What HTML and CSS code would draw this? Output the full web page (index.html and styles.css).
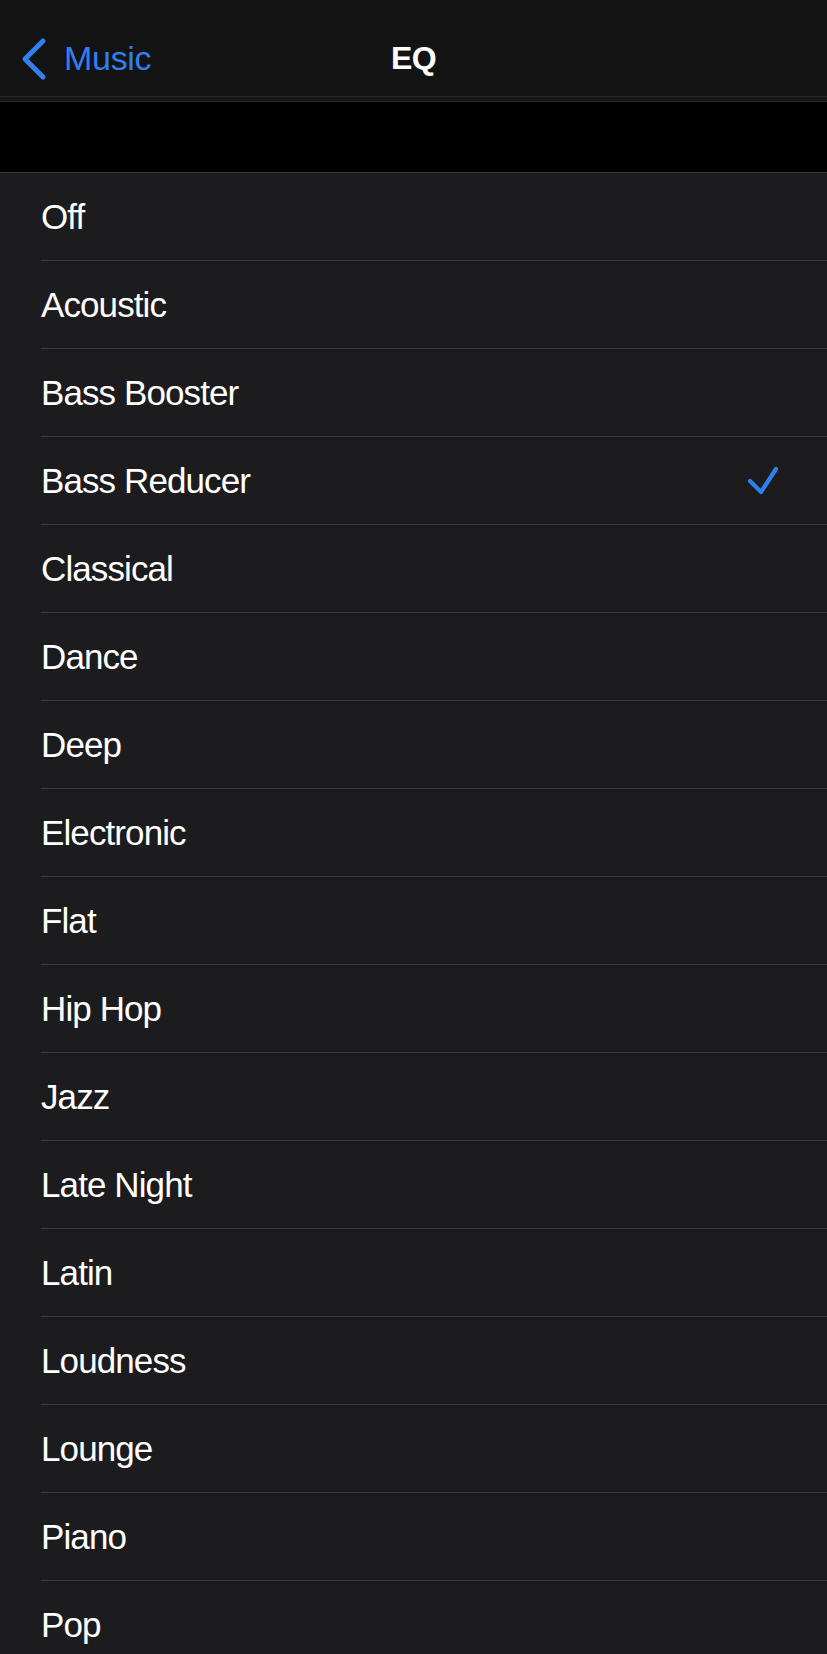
FILE: index.html
```html
<!DOCTYPE html>
<html lang="en">
<head>
  <meta charset="UTF-8" />
  <meta name="viewport" content="width=device-width, initial-scale=1.0"/>
  <title>EQ</title>
  <link rel="stylesheet" href="styles.css">
</head>
<body>
  <div class="nav">
    <div class="nav-inner">
      <a class="back" href="#">
        <svg class="chevron" width="30" height="44" viewBox="0 0 30 44">
          <polyline points="22,4 4,22 22,40" fill="none" stroke="currentColor" stroke-width="5" stroke-linecap="round" stroke-linejoin="round"/>
        </svg>
        <span>Music</span>
      </a>
      <div class="title">EQ</div>
    </div>
  </div>
  <div class="nav-strip"></div>
  <div class="gap"></div>

  <ul class="list">
    <li class="row">Off</li>
    <li class="row">Acoustic</li>
    <li class="row">Bass Booster</li>
    <li class="row selected">Bass Reducer
      <svg class="check" width="32" height="30" viewBox="0 0 32 30">
        <polyline points="3,15 14,26 29,3" fill="none" stroke="currentColor" stroke-width="4.2" stroke-linecap="round" stroke-linejoin="round"/>
      </svg>
    </li>
    <li class="row">Classical</li>
    <li class="row">Dance</li>
    <li class="row">Deep</li>
    <li class="row">Electronic</li>
    <li class="row">Flat</li>
    <li class="row">Hip Hop</li>
    <li class="row">Jazz</li>
    <li class="row">Late Night</li>
    <li class="row">Latin</li>
    <li class="row">Loudness</li>
    <li class="row">Lounge</li>
    <li class="row">Piano</li>
    <li class="row">Pop</li>
  </ul>
</body>
</html>
```

FILE: styles.css
```css
html, body {
  margin: 0;
  padding: 0;
}
body {
  height: 100vh;
  overflow: hidden;
  background: #1c1c1e;
  font-family: "Liberation Sans", Arial, sans-serif;
  color: #fff;
}
.nav {
  height: 97px;
  background: #131313;
  border-bottom: 1px solid #2a2a2a;
  box-sizing: border-box;
  padding-top: 20px;
}
.nav-inner {
  position: relative;
  height: 77px;
  display: flex;
  align-items: center;
  justify-content: center;
}
.back {
  position: absolute;
  left: 21px;
  top: 0;
  bottom: 0;
  display: flex;
  align-items: center;
  gap: 13px;
  color: #2f80ee;
  text-decoration: none;
  font-size: 34px;
  letter-spacing: -0.3px;
}
.chevron {
  display: block;
}
.title {
  font-size: 32px;
  font-weight: bold;
  letter-spacing: -0.5px;
}
.nav-strip {
  height: 4px;
  background: #161616;
  border-bottom: 1px solid #262626;
}
.gap {
  height: 70px;
  background: #000;
}
.list {
  list-style: none;
  margin: 0;
  padding: 0 0 0 41px;
  border-top: 1px solid #3a3a3c;
  background: #1c1c1e;
}
.row {
  height: 87px;
  border-bottom: 1px solid #38383a;
  display: flex;
  align-items: center;
  justify-content: space-between;
  padding-right: 48px;
  font-size: 35px;
  letter-spacing: -0.9px;
}
.check {
  color: #2f80ee;
  display: block;
}
```
